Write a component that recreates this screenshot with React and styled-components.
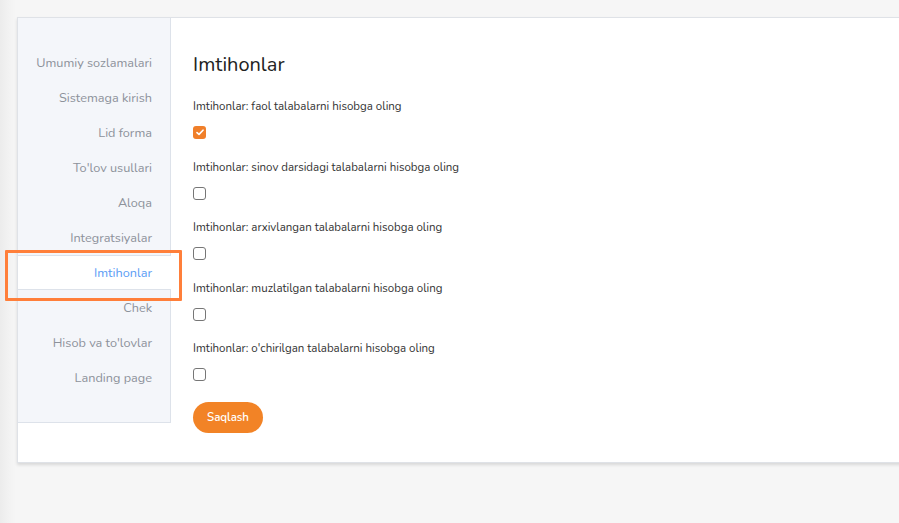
import React from "react";
import styled, { createGlobalStyle } from "styled-components";

const Global = createGlobalStyle`
  html, body { margin: 0; padding: 0; }
  body {
    background: linear-gradient(to right, #ececec 0px, #f3f3f3 10px, #f6f6f6 16px, #f6f6f6 100%);
    font-family: "Nunito", "Noto Sans", "Open Sans", sans-serif;
    width: 899px;
    height: 523px;
    overflow: hidden;
  }
`;

const Page = styled.div`
  padding: 17px 0 0 17px;
`;

const Card = styled.div`
  display: flex;
  align-items: flex-start;
  width: 900px;
  background: #fff;
  border: 1px solid #dfe2e7;
  border-right: none;
  box-shadow: 0 2px 3px rgba(0, 0, 0, 0.12);
`;

const Sidebar = styled.nav`
  position: relative;
  width: 152px;
  flex: none;
  background: #f4f6fa;
  border-right: 1px solid #dde2ea;
  border-bottom: 1px solid #dde2ea;
  padding: 27px 0 27px;
  display: flex;
  flex-direction: column;
`;

const MenuItem = styled.div`
  height: 35px;
  display: flex;
  align-items: center;
  justify-content: flex-end;
  padding-right: 18px;
  font-size: 12.7px;
  color: ${(p) => (p.$active ? "#5b9df5" : "#8d929b")};
  background: ${(p) => (p.$active ? "#fff" : "transparent")};
  box-sizing: border-box;
  ${(p) =>
    p.$active &&
    `
    border-top: 1px solid #dde2ea;
    border-bottom: 1px solid #dde2ea;
    margin-right: -1px;
    padding-right: 19px;
  `}
`;

const Highlight = styled.div`
  position: absolute;
  left: -13px;
  top: 232px;
  width: 171px;
  height: 45px;
  border: 3px solid #ff7f3a;
  border-radius: 1px;
  pointer-events: none;
`;

const Content = styled.main`
  flex: 1;
  padding: 33px 22px 29px 22px;
`;

const Title = styled.h1`
  margin: 0 0 19px;
  font-size: 20px;
  font-weight: 400;
  line-height: 28px;
  color: #222;
`;

const Field = styled.div`
  display: flex;
  flex-direction: column;
  align-items: flex-start;
  margin-bottom: 19.6px;
`;

const Label = styled.label`
  font-size: 11.5px;
  line-height: 16px;
  color: #333;
`;

const Box = styled.span`
  margin-top: 12px;
  width: 13px;
  height: 13px;
  box-sizing: border-box;
  border-radius: 3px;
  border: ${(p) => (p.$checked ? "none" : "1px solid #767676")};
  background: ${(p) => (p.$checked ? "#f07f2a" : "#fff")};
  display: flex;
  align-items: center;
  justify-content: center;
`;

const Button = styled.button`
  margin-top: 1px;
  width: 70px;
  height: 31px;
  border: none;
  border-radius: 16px;
  background: #f28326;
  color: #fff;
  font-family: inherit;
  font-size: 11.5px;
  font-weight: 600;
  cursor: pointer;
`;

const menu = [
  "Umumiy sozlamalari",
  "Sistemaga kirish",
  "Lid forma",
  "To'lov usullari",
  "Aloqa",
  "Integratsiyalar",
  "Imtihonlar",
  "Chek",
  "Hisob va to'lovlar",
  "Landing page",
];

const fields = [
  { label: "Imtihonlar: faol talabalarni hisobga oling", checked: true },
  { label: "Imtihonlar: sinov darsidagi talabalarni hisobga oling" },
  { label: "Imtihonlar: arxivlangan talabalarni hisobga oling" },
  { label: "Imtihonlar: muzlatilgan talabalarni hisobga oling" },
  { label: "Imtihonlar: o'chirilgan talabalarni hisobga oling" },
];

export default function App() {
  return (
    <>
      <Global />
      <Page>
        <Card>
          <Sidebar>
            {menu.map((m) => (
              <MenuItem key={m} $active={m === "Imtihonlar"}>
                {m}
              </MenuItem>
            ))}
            <Highlight />
          </Sidebar>
          <Content>
            <Title>Imtihonlar</Title>
            {fields.map((f) => (
              <Field key={f.label}>
                <Label>{f.label}</Label>
                <Box $checked={f.checked}>
                  {f.checked && (
                    <svg width="8" height="7" viewBox="0 0 8 7">
                      <path
                        d="M1 3.6 L3 5.4 L7 1.2"
                        fill="none"
                        stroke="#fff"
                        strokeWidth="1.6"
                        strokeLinecap="round"
                        strokeLinejoin="round"
                      />
                    </svg>
                  )}
                </Box>
              </Field>
            ))}
            <Button>Saqlash</Button>
          </Content>
        </Card>
      </Page>
    </>
  );
}
